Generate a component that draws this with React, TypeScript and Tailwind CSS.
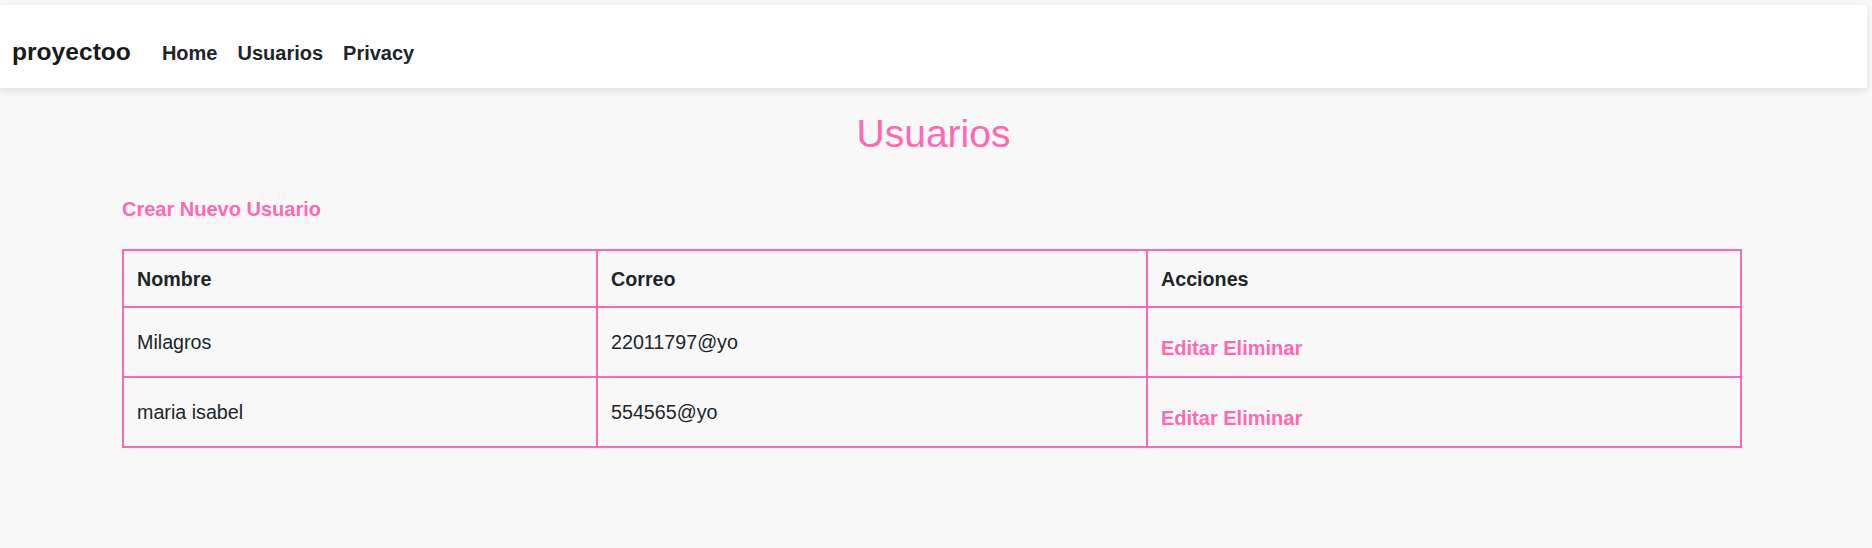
const users = [
  { nombre: "Milagros", correo: "22011797@yo" },
  { nombre: "maria isabel", correo: "554565@yo" },
];

export default function App() {
  return (
    <div className="min-h-screen bg-[#f8f8f8] pt-[5px] font-['Liberation_Sans',Arial,sans-serif] text-[#212529]">
      <nav className="mr-[5px] h-[83px] bg-white shadow-[0_3px_8px_rgba(0,0,0,0.09)] flex items-baseline pl-[12px] pt-[32px]">
        <a className="text-[24.6px] leading-[30px] font-bold text-[#1a1a1a]">proyectoo</a>
        <ul className="ml-[31px] flex items-baseline gap-[20px] text-[20px] font-bold leading-[28px] text-[#212529]">
          <li>Home</li>
          <li>Usuarios</li>
          <li>Privacy</li>
        </ul>
      </nav>

      <h1 className="mt-[22px] mr-[5px] text-center text-[39px] leading-[47px] text-[#ff69b4]">
        Usuarios
      </h1>

      <div className="ml-[122px] w-[1620px]">
        <a className="mt-[40px] block text-[20px] leading-[24px] font-bold text-[#ff69b4]">Crear Nuevo Usuario</a>

        <table className="mt-[28px] w-full table-fixed border-collapse border-2 border-[#ff69b4] text-[19.7px] leading-[24px]">
          <colgroup>
            <col className="w-[474px]" />
            <col className="w-[550px]" />
            <col />
          </colgroup>
          <thead>
            <tr className="h-[57px]">
              <th className="border-2 border-[#ff69b4] pl-[13px] text-left align-middle font-bold">Nombre</th>
              <th className="border-2 border-[#ff69b4] pl-[13px] text-left align-middle font-bold">Correo</th>
              <th className="border-2 border-[#ff69b4] pl-[13px] text-left align-middle font-bold">Acciones</th>
            </tr>
          </thead>
          <tbody>
            {users.map((u) => (
              <tr key={u.correo} className="h-[70px]">
                <td className="border-2 border-[#ff69b4] pl-[13px] align-middle">{u.nombre}</td>
                <td className="border-2 border-[#ff69b4] pl-[13px] align-middle">{u.correo}</td>
                <td className="border-2 border-[#ff69b4] pl-[13px] align-middle">
                  <div className="pt-[12px] text-[20px] font-bold text-[#ff69b4]">
                    <a>Editar</a> <a>Eliminar</a>
                  </div>
                </td>
              </tr>
            ))}
          </tbody>
        </table>
      </div>
    </div>
  );
}
